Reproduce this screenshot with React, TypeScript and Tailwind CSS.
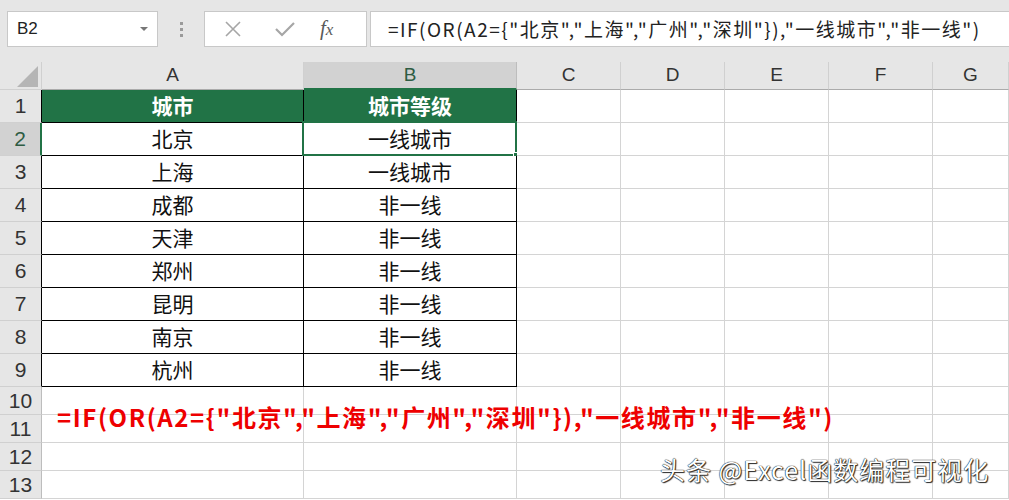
import React from "react";

const cjk = "font-['Noto_Sans_CJK_SC','Noto_Sans',sans-serif]";

const data: [string, string][] = [
  ["北京", "一线城市"],
  ["上海", "一线城市"],
  ["成都", "非一线"],
  ["天津", "非一线"],
  ["郑州", "非一线"],
  ["昆明", "非一线"],
  ["南京", "非一线"],
  ["杭州", "非一线"],
];

const letters = ["A", "B", "C", "D", "E", "F", "G"];

const Toolbar = () => (
  <div className="flex h-[62px] items-start bg-[#e6e6e6] pt-[11px]">
    {/* name box */}
    <div className="ml-[7px] flex h-[36px] w-[151px] items-center justify-between border border-[#c8c8c8] bg-white pl-[9px] pr-[9px]">
      <span className="font-['Liberation_Sans',sans-serif] text-[17px] text-[#222]">B2</span>
      <span className="h-0 w-0 border-x-[4px] border-t-[4px] border-x-transparent border-t-[#777]" />
    </div>
    <div className="flex h-[36px] w-[46px] flex-col items-center justify-center gap-[3px]">
      <span className="h-[3px] w-[3px] bg-[#9a9a9a]" />
      <span className="h-[3px] w-[3px] bg-[#9a9a9a]" />
      <span className="h-[3px] w-[3px] bg-[#9a9a9a]" />
    </div>
    {/* cancel / enter / fx */}
    <div className="flex h-[36px] w-[163px] items-center border border-[#c8c8c8] bg-white">
      <svg width="20" height="20" viewBox="0 0 20 20" className="ml-[18px]">
        <path d="M3 3 L17 17 M17 3 L3 17" stroke="#a6a6a6" strokeWidth="1.6" fill="none" />
      </svg>
      <svg width="22" height="20" viewBox="0 0 22 20" className="ml-[31px]">
        <path d="M2 10 L8 16 L20 4" stroke="#a6a6a6" strokeWidth="2.2" fill="none" />
      </svg>
      <span className="ml-[24px] font-['Liberation_Serif',serif] text-[21px] italic text-[#5a5a5a]">
        f<span className="text-[17px]">x</span>
      </span>
    </div>
    {/* formula box */}
    <div className="ml-[3px] flex h-[36px] flex-1 items-center border-y border-l border-[#c8c8c8] bg-white pl-[17px]">
      <span className={`${cjk} whitespace-nowrap text-[19px] tracking-[1.5px] text-[#222]`}>
        =IF(OR(A2={"{"}"北京","上海","广州","深圳"{"}"}),"一线城市","非一线")
      </span>
    </div>
  </div>
);

const Sheet = () => {
  const rows: { n: number; h: string }[] = [];
  for (let i = 1; i <= 13; i++) rows.push({ n: i, h: i <= 9 ? "h-[33px]" : "h-[28px]" });

  return (
    <div className="grid grid-cols-[42px_262px_213px_104px_104px_104px_104px_1fr]">
      {/* corner */}
      <div className="relative h-[28px] border-r border-b border-[#d0d0d0] bg-[#e6e6e6]">
        <svg width="21" height="21" viewBox="0 0 21 21" className="absolute right-[3px] bottom-[2px]">
          <path d="M21 0 L21 21 L0 21 Z" fill="#b5b5b5" />
        </svg>
      </div>
      {letters.map((l) => (
        <div
          key={l}
          className={`flex h-[28px] items-center justify-center font-['Liberation_Sans',sans-serif] text-[19px] ${
            l === "B"
              ? "border-r border-b-2 border-r-[#bdbdbd] border-b-[#217346] bg-[#d2d2d2] text-[#2e5c43]"
              : "border-r border-b border-r-[#d0d0d0] border-b-[#ababab] bg-[#e6e6e6] text-[#333]"
          }`}
        >
          {l}
        </div>
      ))}

      {rows.map(({ n, h }) => {
        const inTable = n <= 9;
        const rowHead =
          n === 2
            ? "border-r-2 border-r-[#217346] bg-[#d2d2d2] text-[#2e5c43]"
            : inTable
            ? "border-r border-r-black bg-[#e6e6e6] text-[#333]"
            : "border-r border-r-[#bdbdbd] bg-[#e6e6e6] text-[#333]";
        return (
          <React.Fragment key={n}>
            <div
              className={`${h} flex items-center justify-center border-b border-b-[#d0d0d0] font-['Liberation_Sans',sans-serif] text-[21px] ${rowHead}`}
            >
              {n}
            </div>
            {letters.map((l, ci) => {
              const tableCell = inTable && ci < 2;
              const header = n === 1 && ci < 2;
              let text = "";
              if (n === 1 && ci === 0) text = "城市";
              if (n === 1 && ci === 1) text = "城市等级";
              if (n >= 2 && n <= 9 && ci < 2) text = data[n - 2][ci];
              return (
                <div
                  key={l}
                  className={`${h} relative flex items-center justify-center border-r border-b ${cjk} ${
                    tableCell ? "border-black" : "border-[#d4d4d4]"
                  } ${header ? "bg-[#217346] text-[21px] font-bold text-white" : "bg-white text-[21px] text-[#111]"}`}
                >
                  {text}
                  {n === 2 && l === "B" && (
                    <>
                      <div className="absolute -top-[2px] -left-[2px] -right-px -bottom-px border-2 border-[#217346]" />
                      <div className="absolute -right-[4px] -bottom-[4px] h-[7px] w-[7px] border border-white bg-[#217346]" />
                    </>
                  )}
                </div>
              );
            })}
          </React.Fragment>
        );
      })}
    </div>
  );
};

export default function App() {
  return (
    <div className="relative h-[500px] w-[1009px] overflow-hidden bg-white">
      <Toolbar />
      <Sheet />
      {/* note typed over rows 10-11 */}
      <div
        className={`${cjk} absolute left-[57px] top-[402px] whitespace-nowrap text-[24px] leading-[30px] tracking-[1.6px] font-bold text-[#ee0000]`}
      >
        =IF(OR(A2={"{"}"北京","上海","广州","深圳"{"}"}),"一线城市","非一线")
      </div>
      {/* watermark */}
      <div
        className={`${cjk} absolute left-[660px] top-[454px] whitespace-nowrap text-[25px] leading-[30px] tracking-[1px] text-white [text-shadow:0_0_1px_#000,0_0_1px_#000,1px_1px_1px_#333]`}
      >
        头条 @Excel函数编程可视化
      </div>
    </div>
  );
}
